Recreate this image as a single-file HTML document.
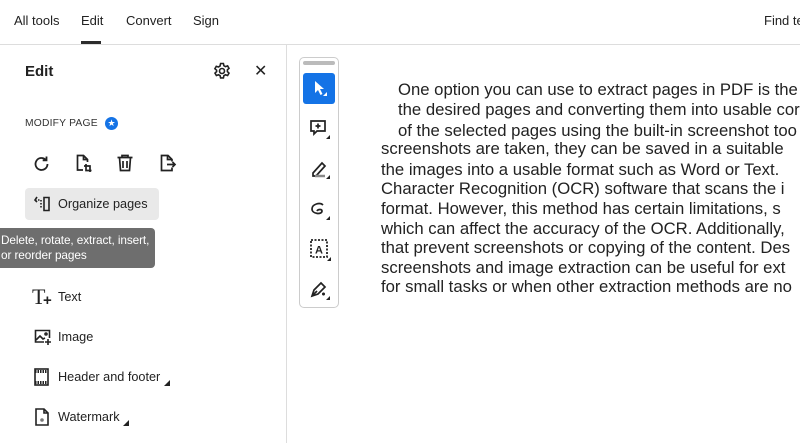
<!DOCTYPE html>
<html><head><meta charset="utf-8"><style>
*{margin:0;padding:0;box-sizing:border-box}
body{width:800px;height:443px;overflow:hidden;background:#fff;font-family:"Liberation Sans",sans-serif;color:#222;position:relative}
.a{position:absolute;white-space:nowrap}
.nav{font-size:13px;top:13px;color:#222}
.it{font-size:12.7px;color:#222}
.doc{font-family:"Liberation Sans",Arial,sans-serif;font-size:16.7px;color:#222;position:absolute;white-space:nowrap;line-height:20px}
svg{position:absolute}
</style></head><body>
<div class="a nav" style="left:14px">All tools</div>
<div class="a nav" style="left:81px">Edit</div>
<div class="a" style="left:81px;top:41px;width:20px;height:3px;background:#2c2c2c"></div>
<div class="a nav" style="left:126px">Convert</div>
<div class="a nav" style="left:193px">Sign</div>
<div class="a nav" style="left:764px">Find te</div>
<div class="a" style="left:0;top:44px;width:800px;height:1px;background:#ddd"></div>
<div class="a" style="left:286px;top:45px;width:1px;height:398px;background:#ddd"></div>

<div class="a" style="left:25px;top:63px;font-size:15px;font-weight:bold;color:#222">Edit</div>
<svg style="left:213px;top:62px" width="18" height="18" viewBox="0 0 18 18" fill="none" stroke="#222" stroke-width="1.6"><circle cx="9" cy="9" r="2.5"/><path d="M7.6 1.5h2.8l.5 2.2 1.6.9 2.1-.7 1.4 2.4-1.6 1.5v1.8l1.6 1.5-1.4 2.4-2.1-.7-1.6.9-.5 2.2H7.6l-.5-2.2-1.6-.9-2.1.7-1.4-2.4 1.6-1.5V8.2L1.9 6.7l1.4-2.4 2.1.7 1.6-.9z"/></svg>
<div class="a" style="left:254px;top:61px;font-size:16px;color:#222">✕</div>

<div class="a" style="left:25px;top:118px;font-size:10.3px;letter-spacing:.2px;color:#333">MODIFY PAGE</div>
<div class="a" style="left:105px;top:117px;width:13px;height:13px;border-radius:50%;background:#1473e6;color:#fff;font-size:9px;line-height:13px;text-align:center">★</div>

<svg style="left:32px;top:154px" width="20" height="20" viewBox="0 0 20 20" fill="none" stroke="#222" stroke-width="1.8"><path d="M15.5 10a6 6 0 1 1-1.8-4.3"/><path d="M14.5 2.5v3.8h-3.8"/></svg>
<svg style="left:74px;top:153px" width="20" height="20" viewBox="0 0 20 20" fill="none" stroke="#222" stroke-width="1.7"><path d="M9 17H3.5V2.5h6l4 4V9"/><path d="M9.5 2.5v4h4"/><path d="M12 11v6.5h5.5M10 13h6v6"/></svg>
<svg style="left:115px;top:153px" width="20" height="20" viewBox="0 0 20 20" fill="none" stroke="#222" stroke-width="1.7"><path d="M2.5 4.5h15M7 4.5V2.5h6v2M4.5 4.5l1 13h9l1-13M8 8v7M12 8v7"/></svg>
<svg style="left:157px;top:153px" width="20" height="20" viewBox="0 0 20 20" fill="none" stroke="#222" stroke-width="1.7"><path d="M15 8.5V6.5l-4-4H4.5v15H15v-3"/><path d="M10.5 2.5v4h4.5M10 11.5h8M15.5 9l2.5 2.5-2.5 2.5"/></svg>

<div class="a" style="left:25px;top:188px;width:134px;height:32px;background:#e9e9e9;border-radius:4px"></div>
<svg style="left:33px;top:196px" width="18" height="16" viewBox="0 0 18 16" fill="none" stroke="#222" stroke-width="1.6"><path d="M11 1.5h5v13h-5z"/><path d="M2 4h6v8" stroke-dasharray="1.5 1.5"/><path d="M4 1l-2 3 2 2"/></svg>
<div class="a it" style="left:58px;top:197px">Organize pages</div>

<div class="a" style="left:0;top:228px;width:155px;height:40px;background:#6e6e6e;border-radius:0 4px 4px 0"></div>
<div class="a" style="left:1px;top:233px;font-size:11.8px;color:#fff;line-height:15px;letter-spacing:-.1px">Delete, rotate, extract, insert,<br>or reorder pages</div>

<div class="a" style="left:32px;top:284px;font-size:22px;font-family:'Liberation Serif',serif;color:#222">T</div>
<div class="a" style="left:43px;top:292px;font-size:15px;color:#222;font-weight:bold">+</div>
<div class="a it" style="left:58px;top:290px">Text</div>
<svg style="left:34px;top:329px" width="18" height="17" viewBox="0 0 18 17" fill="none" stroke="#222" stroke-width="1.6"><path d="M10 13H1.5V1.5h14V9"/><path d="M2 11l4-4 3 3 2-1"/><circle cx="12" cy="5" r="1"/><path d="M14 10v6M11 13h6"/></svg>
<div class="a it" style="left:58px;top:330px">Image</div>
<svg style="left:34px;top:368px" width="15" height="18" viewBox="0 0 15 18" fill="none" stroke="#222" stroke-width="1.6"><rect x="1" y="1" width="13" height="16"/><path d="M1 3.5h13M1 14.5h13" stroke-width="3" stroke-dasharray="1.5 1"/></svg>
<div class="a it" style="left:58px;top:370px">Header and footer</div>
<div class="a" style="left:164px;top:380px;width:0;height:0;border-left:6px solid transparent;border-bottom:6px solid #222"></div>
<svg style="left:35px;top:408px" width="14" height="18" viewBox="0 0 14 18" fill="none" stroke="#222" stroke-width="1.6"><path d="M1 1h8l4 4v12H1z"/><path d="M9 1v4h4"/><circle cx="7" cy="12" r="1.8" fill="#777" stroke="none"/></svg>
<div class="a it" style="left:58px;top:410px">Watermark</div>
<div class="a" style="left:123px;top:420px;width:0;height:0;border-left:6px solid transparent;border-bottom:6px solid #222"></div>

<div class="a" style="left:299px;top:57px;width:40px;height:251px;border:1px solid #ccc;border-radius:5px"></div>
<div class="a" style="left:303px;top:61px;width:32px;height:4px;background:#bbb;border-radius:2px"></div>
<div class="a" style="left:303px;top:73px;width:32px;height:31px;background:#1473e6;border-radius:3px"></div>
<svg style="left:312px;top:80px" width="16" height="18" viewBox="0 0 16 18"><path d="M3 1l9 8H8l2.5 5-2 1L6 10l-3 3z" fill="#fff"/><path d="M11 16h4v-4z" fill="#fff"/></svg>
<svg style="left:309px;top:119px" width="24" height="22" viewBox="0 0 24 22" fill="none" stroke="#222" stroke-width="1.7"><path d="M2 2h14v10H8l-3 3v-3H2z"/><path d="M9 4.5v5M6.5 7h5"/><path d="M17 20h4v-4z" fill="#222" stroke="none"/></svg>
<svg style="left:309px;top:158px" width="24" height="22" viewBox="0 0 24 22" fill="none" stroke="#222" stroke-width="1.7"><path d="M4 15l9-10 3 3-9 10H4z"/><path d="M6 18h10" stroke="#888" stroke-width="2.5"/><path d="M17 21h4v-4z" fill="#222" stroke="none"/></svg>
<svg style="left:309px;top:199px" width="24" height="22" viewBox="0 0 24 22" fill="none" stroke="#222" stroke-width="1.7"><path d="M14 6c-3-3-11-1-11 4s10 6 10 2c0-2-4-2-5 0"/><path d="M17 21h4v-4z" fill="#222" stroke="none"/></svg>
<svg style="left:309px;top:238px" width="24" height="24" viewBox="0 0 24 24" fill="none" stroke="#222" stroke-width="1.8"><rect x="2" y="2" width="16" height="17" stroke-dasharray="2 1.5"/><text x="6" y="15.5" font-size="11" font-weight="bold" fill="#222" stroke="none" font-family="Liberation Sans">A</text><path d="M18 23h4v-4z" fill="#222" stroke="none"/></svg>
<svg style="left:309px;top:279px" width="24" height="22" viewBox="0 0 24 22" fill="none" stroke="#222" stroke-width="1.7"><path d="M3 17l2-6 7-7 4 4-7 7z"/><path d="M3 17l5-5"/><path d="M13 15l3 0M14.5 13.5v3"/><path d="M17 21h4v-4z" fill="#222" stroke="none"/></svg>

<div class="doc" style="left:398px;top:80px">One option you can use to extract pages in PDF is the</div>
<div class="doc" style="left:398px;top:100px">the desired pages and converting them into usable cor</div>
<div class="doc" style="left:398px;top:121px">of the selected pages using the built-in screenshot too</div>
<div class="doc" style="left:381px;top:139px">screenshots are taken, they can be saved in a suitable</div>
<div class="doc" style="left:381px;top:160px">the images into a usable format such as Word or Text.</div>
<div class="doc" style="left:381px;top:179px">Character Recognition (OCR) software that scans the i</div>
<div class="doc" style="left:381px;top:199px">format. However, this method has certain limitations, s</div>
<div class="doc" style="left:381px;top:219px">which can affect the accuracy of the OCR. Additionally,</div>
<div class="doc" style="left:381px;top:238px">that prevent screenshots or copying of the content. Des</div>
<div class="doc" style="left:381px;top:258px">screenshots and image extraction can be useful for ext</div>
<div class="doc" style="left:381px;top:277px">for small tasks or when other extraction methods are no</div>
</body></html>
